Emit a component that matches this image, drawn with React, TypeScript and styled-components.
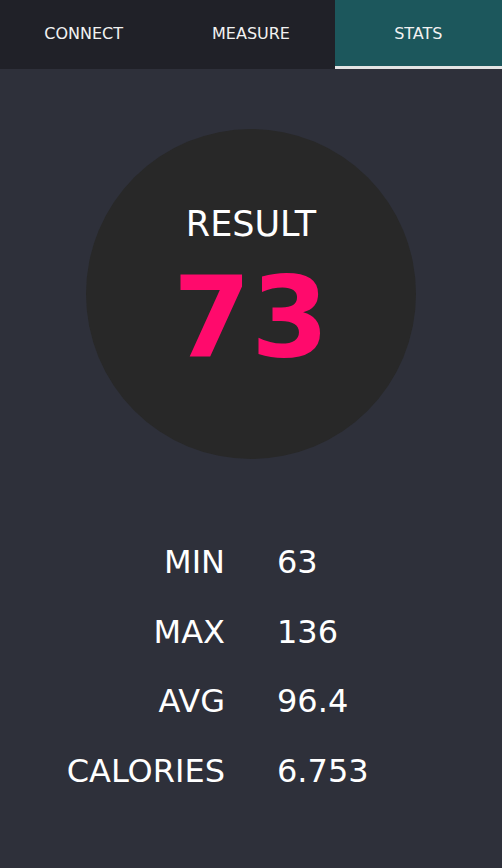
import React from 'react'
import styled, { createGlobalStyle } from 'styled-components'

const GlobalStyle = createGlobalStyle`
  html, body {
    margin: 0;
    padding: 0;
    background: #2e303a;
  }
  body {
    font-family: "DejaVu Sans", sans-serif;
    color: #ffffff;
  }
`

const Page = styled.div`
  width: 502px;
  min-height: 868px;
  display: flex;
  flex-direction: column;
  background: #2e303a;
`

const TabBar = styled.nav`
  display: grid;
  grid-template-columns: repeat(3, 1fr);
  background: #202128;
`

const Tab = styled.div<{ $active?: boolean }>`
  height: 66px;
  display: flex;
  align-items: center;
  justify-content: center;
  font-size: 16px;
  color: #f2f2f2;
  background: ${(p) => (p.$active ? '#1c575c' : 'transparent')};
  border-bottom: 3px solid ${(p) => (p.$active ? '#e4e4e4' : 'transparent')};
`

const Content = styled.main`
  display: flex;
  flex-direction: column;
  align-items: center;
  padding-top: 60px;
`

const Circle = styled.div`
  width: 330px;
  height: 330px;
  border-radius: 50%;
  background: #282828;
  display: flex;
  flex-direction: column;
  align-items: center;
  justify-content: center;
  padding-bottom: 8px;
  box-sizing: border-box;
`

const CircleTitle = styled.div`
  font-size: 35px;
  line-height: 40px;
  color: #ffffff;
`

const CircleValue = styled.div`
  margin-top: 13px;
  font-size: 112px;
  font-weight: bold;
  line-height: 120px;
  color: #ff0a6c;
`

const StatsGrid = styled.div`
  margin-top: 69px;
  display: grid;
  grid-template-columns: 175px 175px;
  column-gap: 52px;
`

const StatLabel = styled.div`
  text-align: right;
  font-size: 32px;
  line-height: 69.5px;
`

const StatValue = styled.div`
  text-align: left;
  font-size: 32px;
  line-height: 69.5px;
`

const stats = [
  { label: 'MIN', value: '63' },
  { label: 'MAX', value: '136' },
  { label: 'AVG', value: '96.4' },
  { label: 'CALORIES', value: '6.753' },
]

export default function App() {
  return (
    <Page>
      <GlobalStyle />
      <TabBar>
        <Tab>CONNECT</Tab>
        <Tab>MEASURE</Tab>
        <Tab $active>STATS</Tab>
      </TabBar>
      <Content>
        <Circle>
          <CircleTitle>RESULT</CircleTitle>
          <CircleValue>73</CircleValue>
        </Circle>
        <StatsGrid>
          {stats.map((s) => (
            <React.Fragment key={s.label}>
              <StatLabel>{s.label}</StatLabel>
              <StatValue>{s.value}</StatValue>
            </React.Fragment>
          ))}
        </StatsGrid>
      </Content>
    </Page>
  )
}
